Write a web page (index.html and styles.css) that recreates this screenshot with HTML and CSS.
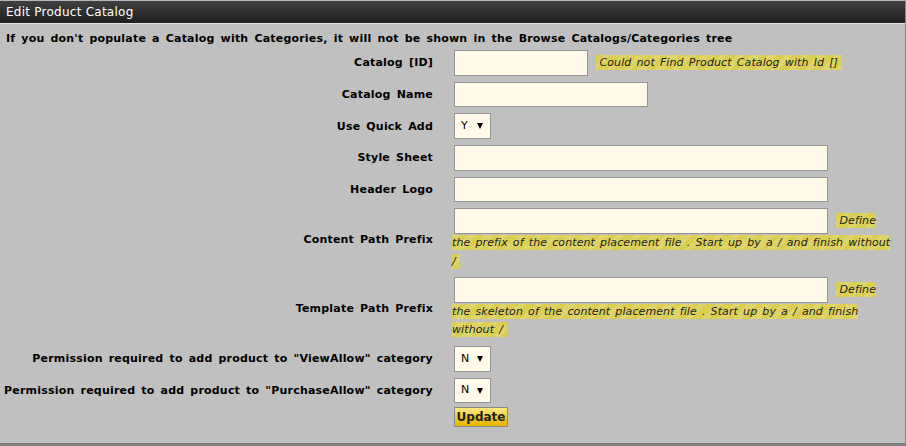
FILE: index.html
```html
<!DOCTYPE html>
<html>
<head>
<meta charset="utf-8">
<link rel="stylesheet" href="styles.css">
</head>
<body>
<div class="panel">
  <div class="panel-head">Edit Product Catalog</div>
  <div class="panel-body">
    <p class="intro">If you don't populate a Catalog with Categories, it will not be shown in the Browse Catalogs/Categories tree</p>
    <table class="form">
      <tr>
        <td class="label">Catalog [ID]</td>
        <td class="value"><input class="field w-s" type="text"> <span class="hint">Could not Find Product Catalog with Id []</span></td>
      </tr>
      <tr>
        <td class="label">Catalog Name</td>
        <td class="value"><input class="field w-m" type="text"></td>
      </tr>
      <tr>
        <td class="label">Use Quick Add</td>
        <td class="value"><span class="sel"><select><option>Y</option><option>N</option></select></span></td>
      </tr>
      <tr>
        <td class="label">Style Sheet</td>
        <td class="value"><input class="field w-l" type="text"></td>
      </tr>
      <tr>
        <td class="label">Header Logo</td>
        <td class="value"><input class="field w-l" type="text"></td>
      </tr>
      <tr>
        <td class="label">Content Path Prefix</td>
        <td class="value"><input class="field w-l" type="text"> <span class="hint">Define the prefix of the content placement file . Start up by a / and finish without /</span></td>
      </tr>
      <tr>
        <td class="label">Template Path Prefix</td>
        <td class="value"><input class="field w-l" type="text"> <span class="hint">Define the skeleton of the content placement file . Start up by a / and finish without /</span></td>
      </tr>
      <tr>
        <td class="label">Permission required to add product to "ViewAllow" category</td>
        <td class="value"><span class="sel"><select><option>N</option><option>Y</option></select></span></td>
      </tr>
      <tr>
        <td class="label">Permission required to add product to "PurchaseAllow" category</td>
        <td class="value"><span class="sel"><select><option>N</option><option>Y</option></select></span></td>
      </tr>
      <tr class="actions">
        <td class="label"></td>
        <td class="value"><button class="btn" type="button">Update</button></td>
      </tr>
    </table>
  </div>
</div>
</body>
</html>
```

FILE: styles.css
```css
html, body {
  margin: 0;
  padding: 0;
  background: #c0c0c0;
}
body {
  font-family: "DejaVu Sans", Verdana, sans-serif;
  font-size: 11px;
  color: #000;
}
.panel {
  width: 905px;
  height: 443px;
  border-right: 1px solid #8a8a8a;
  border-bottom: 3px solid #808080;
  background: #c0c0c0;
}
.panel-head {
  height: 22px;
  line-height: 23px;
  border-top: 1px solid #b8b8b8;
  border-bottom: 1px solid #e4e4dc;
  background: linear-gradient(#404040, #1e1e1e);
  color: #fff;
  padding-left: 6px;
  font-size: 12px;
  letter-spacing: 0.25px;
}
.intro {
  margin: 0;
  padding: 8px 6px 1px;
  font-weight: bold;
  line-height: 14px;
  letter-spacing: 0.2px;
  word-spacing: 2px;
}
.form {
  border-collapse: collapse;
  width: 905px;
}
.form td {
  padding: 3px;
}
.form td.label {
  width: 430px;
  text-align: right;
  padding-right: 18px;
  font-weight: bold;
  white-space: nowrap;
  vertical-align: middle;
  letter-spacing: 0.2px;
  word-spacing: 2px;
}
.form td.value {
  vertical-align: middle;
  line-height: 18.6px;
  padding-left: 1px;
  padding-right: 9px;
}
.form .actions td {
  padding-top: 1px;
}
.field {
  box-sizing: border-box;
  height: 25.67px;
  margin: 0 0 0 2px;
  border: 1px solid #959595;
  background: #fffbe8;
  vertical-align: middle;
  font: inherit;
  padding: 0 3px;
}
.w-s { width: 134px; }
.w-m { width: 194px; }
.w-l { width: 374px; }
.hint {
  font-style: italic;
  color: #222;
  letter-spacing: 0.1px;
  word-spacing: 1.5px;
  padding: 1px 4px;
  margin-left: 4px;
  background: repeating-linear-gradient(135deg, #d6ca3c 0 1px, #e2da80 1px 2px);
}
.sel {
  position: relative;
  display: inline-block;
  vertical-align: middle;
  margin-left: 2px;
}
.sel select {
  -webkit-appearance: none;
  appearance: none;
  box-sizing: border-box;
  width: 37px;
  height: 25.67px;
  margin: 0;
  border: 1px solid #959595;
  background: #fffbe8;
  font: inherit;
  font-size: 11px;
  color: #000;
  padding: 0 0 0 6px;
}
.sel::after {
  content: "";
  position: absolute;
  right: 8px;
  top: 10px;
  border-left: 3px solid transparent;
  border-right: 3px solid transparent;
  border-top: 6px solid #000;
  pointer-events: none;
}
.btn {
  box-sizing: border-box;
  height: 20px;
  width: 54px;
  margin: 0 0 0 2px;
  padding: 0;
  border: 1px solid #8a8a7a;
  background: linear-gradient(#fbe985, #f0c820 60%, #e6b400);
  font-family: "DejaVu Sans", Verdana, sans-serif;
  font-weight: bold;
  font-size: 12px;
  color: #222;
  vertical-align: middle;
}
```
